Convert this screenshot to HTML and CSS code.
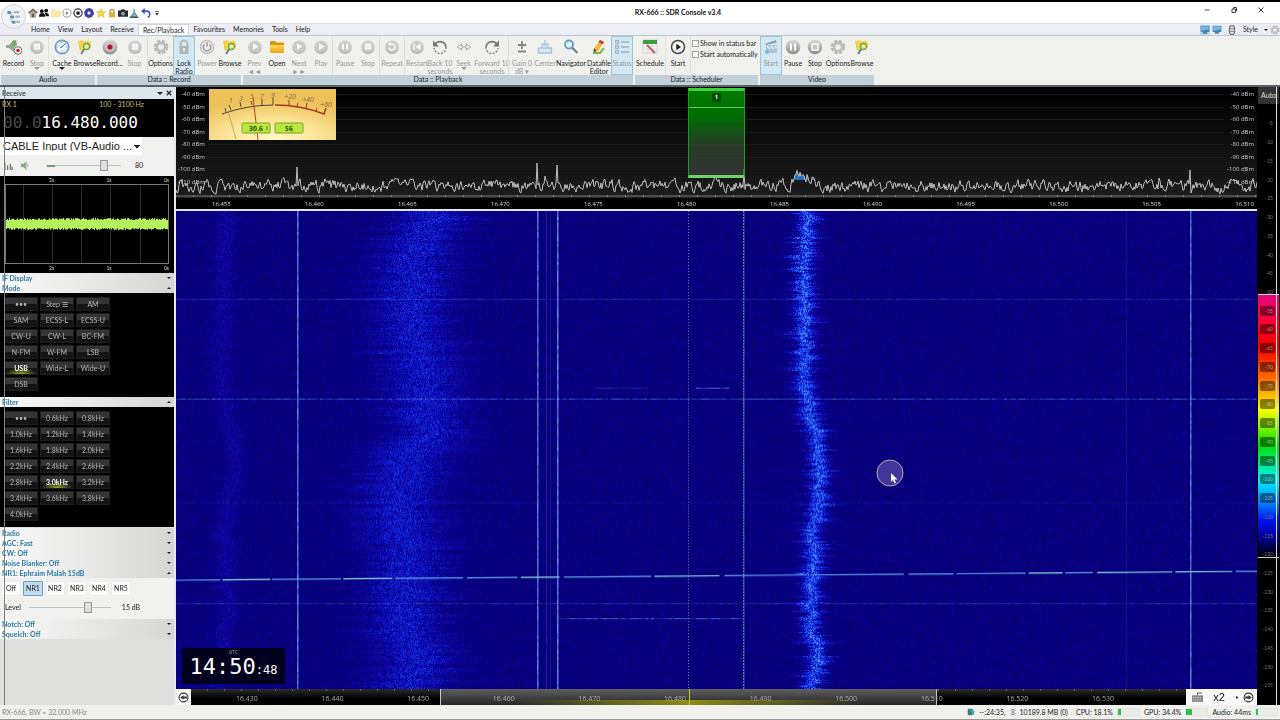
FILE: index.html
```html
<!DOCTYPE html>
<html lang="en">

<head>
  <meta charset="UTF-8">
  <meta name="viewport" content="width=device-width, initial-scale=1.0">
  <title>RX-666 :: SDR Console v3.4</title>
  <link rel="stylesheet" href="styles.css">
</head>

<body>
  <!-- Shared icons -->
  <svg class="defs" aria-hidden="true">
    <defs>
      <linearGradient id="steel" x1="0" y1="0" x2="0" y2="1">
        <stop offset="0" stop-color="#dadada" /><stop offset="1" stop-color="#8c8c8c" />
      </linearGradient>
      <linearGradient id="pale" x1="0" y1="0" x2="0" y2="1">
        <stop offset="0" stop-color="#e4e4e2" /><stop offset="1" stop-color="#b4b4b2" />
      </linearGradient>
      <linearGradient id="gold" x1="0" y1="0" x2="0" y2="1">
        <stop offset="0" stop-color="#ffd75a" /><stop offset="1" stop-color="#eda51c" />
      </linearGradient>
      <radialGradient id="dial" cx=".5" cy="1" r=".8">
        <stop offset="0" stop-color="#fff8c8" /><stop offset=".5" stop-color="#fbe394" /><stop offset="1" stop-color="#edc058" />
      </radialGradient>
      <symbol id="i-disc" viewBox="0 0 16 16"><circle cx="8" cy="8" r="7" fill="url(#pale)" /><circle cx="8" cy="7.500" r="5.500" fill="#c9c9c7" /></symbol>
      <symbol id="i-record" viewBox="0 0 16 16"><circle cx="8" cy="8" r="7.500" fill="url(#steel)" /><circle cx="8" cy="8" r="5" fill="#c9c4c4" /><circle cx="8" cy="8" r="2.600" fill="#c4122a" /></symbol>
      <symbol id="i-stop" viewBox="0 0 16 16"><use href="#i-disc" /><rect x="5.500" y="5" width="5" height="5" fill="#eee" stroke="#fff" /></symbol>
      <symbol id="i-stop-on" viewBox="0 0 16 16"><circle cx="8" cy="8" r="7.300" fill="url(#steel)" /><rect x="5" y="5" width="6" height="6" fill="#c4c4c4" stroke="#fff" stroke-width="1.400" /></symbol>
      <symbol id="i-pause" viewBox="0 0 16 16"><use href="#i-disc" /><path d="M6 4.500v6M10 4.500v6" stroke="#f6f6f6" stroke-width="2" /></symbol>
      <symbol id="i-pause-on" viewBox="0 0 16 16"><circle cx="8" cy="8" r="7.300" fill="url(#steel)" /><path d="M6 4.500v7M10 4.500v7" stroke="#fff" stroke-width="2" /></symbol>
      <symbol id="i-play" viewBox="0 0 16 16"><use href="#i-disc" /><path d="M6 4l5.500 3.500L6 11z" fill="#f6f6f6" /></symbol>
      <symbol id="i-restart" viewBox="0 0 16 16"><use href="#i-disc" /><path d="M5 4.500v6.500" stroke="#f6f6f6" stroke-width="1.500" /><path d="M11.500 4L6.500 7.700l5 3.500z" fill="#f6f6f6" /></symbol>
      <symbol id="i-repeat" viewBox="0 0 16 16"><use href="#i-disc" /><path d="M5 8.500a3 3 0 1 0 3-3.500H6" fill="none" stroke="#f6f6f6" stroke-width="1.500" /><path d="M7 2.500v5L4 5z" fill="#f6f6f6" /></symbol>
      <symbol id="i-gear" viewBox="0 0 16 16"><circle cx="8" cy="8" r="5.800" fill="none" stroke="#b8b8b8" stroke-width="3" stroke-dasharray="3.200 1.355" /><circle cx="8" cy="8" r="4" fill="#efefed" stroke="#bdbdbd" stroke-width="2.400" /></symbol>
      <symbol id="i-clock" viewBox="0 0 16 16"><circle cx="8" cy="8" r="6.700" fill="#edf5fd" stroke="#6d9bd2" stroke-width="1.700" /><path d="M8 8l3.500-3.500M8 8l-2 .500" stroke="#3c6aa8" stroke-width="1" /><path d="M8 2.500v1.500M8 12v1.500M2.500 8H4M12 8h1.500" stroke="#7ca4d0" /></symbol>
      <symbol id="i-browse" viewBox="0 0 16 16"><path d="M1 2l5-1 1 1.500 6-1 1 7-11 3z" fill="url(#gold)" /><path d="M2 5l12-1-3 6-7 2z" fill="#e9d84b" /><circle cx="9.500" cy="7.500" r="3" fill="#d9ecc0" stroke="#7ea52e" stroke-width="1.300" /><path d="M7.500 10L4 15" stroke="#5d86a8" stroke-width="2" /></symbol>
      <symbol id="i-folder" viewBox="0 0 16 16"><path d="M1 3q0-1 1-1h4l1.500 1.500H14q1 0 1 1V13H1z" fill="#d6961a" /><path d="M1 6h14v7q0 1-1 1H2q-1 0-1-1z" fill="url(#gold)" /></symbol>
      <symbol id="i-lock" viewBox="0 0 16 16"><path d="M4.500 8V5a3.500 3.500 0 0 1 7 0v3" fill="none" stroke="#b4bcc0" stroke-width="2" /><rect x="3.500" y="7" width="9" height="8" rx="1" fill="#aeb6ba" /><circle cx="8" cy="10" r="1.300" fill="#e7edf0" /><path d="M8 10v3" stroke="#e7edf0" stroke-width="1.200" /></symbol>
      <symbol id="i-power" viewBox="0 0 16 16"><circle cx="8" cy="8" r="6.500" fill="#ececea" stroke="#c2c2c0" stroke-width="1.500" /><path d="M5.500 5.500a3.700 3.700 0 1 0 5 0M8 3v4.500" fill="none" stroke="#9b9b99" stroke-width="1.500" /></symbol>
      <symbol id="i-speaker" viewBox="0 0 16 16"><path d="M0 6h3l5-5v12l-5-4H0z" fill="#9ba59b" /><path d="M6 2l4-1 1 5-4 3z" fill="#6fae5e" /><circle cx="12" cy="11.500" r="3.800" fill="#fff" stroke="#555" stroke-width=".900" /><circle cx="12" cy="11.500" r="1.800" fill="#d01830" /></symbol>
      <symbol id="i-back" viewBox="0 0 16 16"><path d="M3 5.500A6 6 0 0 1 14 8" fill="none" stroke="#777" stroke-width="1.700" /><path d="M14 8A6 6 0 0 1 2 9" fill="none" stroke="#888" stroke-width="1.500" stroke-dasharray="2 1.400" /><path d="M1 1.500v6h6z" fill="#777" /></symbol>
      <symbol id="i-fwd" viewBox="0 0 16 16"><path d="M13 5.500A6 6 0 0 0 2 8" fill="none" stroke="#777" stroke-width="1.700" /><path d="M2 8A6 6 0 0 0 14 9" fill="none" stroke="#888" stroke-width="1.500" stroke-dasharray="2 1.400" /><path d="M15 1.500v6H9z" fill="#777" /></symbol>
      <symbol id="i-seek" viewBox="0 0 16 16"><path d="M1 8l4.500-3v2H7v2H5.500v2zM15 8l-4.500-3v2H9v2h1.500v2z" fill="#eee" stroke="#a5a5a3" stroke-width=".900" /></symbol>
      <symbol id="i-gain" viewBox="0 0 16 16"><path d="M8 2v8M4 6h8M4 12.500h8" stroke="#858583" stroke-width="1.800" /></symbol>
      <symbol id="i-center" viewBox="0 0 16 16"><path d="M8 1v6M5 5h6v4H5zM1.500 9h13v5h-13z" fill="#dce8f0" stroke="#a9c3d4" stroke-width="1.300" /></symbol>
      <symbol id="i-search" viewBox="0 0 16 16"><circle cx="6" cy="5.500" r="4" fill="#e3f2fb" stroke="#5b9fd0" stroke-width="1.800" /><path d="M9 8.500l5.500 5.500" stroke="#6f7f90" stroke-width="2.200" /></symbol>
      <symbol id="i-pencil" viewBox="0 0 16 16"><path d="M9 1l4 2-6 9-4 1 .500-4z" fill="#f4b62c" /><path d="M9 1l4 2-1.500 2.300-4-2.200z" fill="#b6404a" /><path d="M2 14h7l4-5" fill="none" stroke="#73b533" stroke-width="2" /><path d="M3 9l-.500 4 3-1z" fill="#503820" /></symbol>
      <symbol id="i-list" viewBox="0 0 16 16"><path d="M1.500 1.500h3v3h-3zM1.500 6.500h3v3h-3zM1.500 11.500h3v3h-3z" fill="#c6d9e4" stroke="#8fb0c5" stroke-width=".900" /><path d="M7 3h8M7 8h8M7 13h8" stroke="#9bb8ca" stroke-width="1.300" /></symbol>
      <symbol id="i-sched" viewBox="0 0 16 16"><rect x="1" y="1" width="14" height="13" fill="#f2f2f2" stroke="#c5c5c5" stroke-width=".700" /><rect x="1" y="1" width="14" height="4" fill="#35a03b" /><path d="M3 7h10M3 10h10M6 5v9M10 5v9" stroke="#cfd6cf" stroke-width=".800" /><path d="M5 6l8 8" stroke="#cc5568" stroke-width="1.800" /></symbol>
      <symbol id="i-go" viewBox="0 0 16 16"><circle cx="8" cy="8" r="6.500" fill="#f5f5f3" stroke="#4a4a4a" stroke-width="1.500" /><path d="M6.300 4.800L11 8l-4.700 3.200z" fill="#222" /></symbol>
      <symbol id="i-clapper" viewBox="0 0 16 16"><path d="M2 5l11-4 .500 2.500L3 6z" fill="#7f9eb2" /><rect x="3" y="6" width="11" height="8" fill="#a9c4d6" /><path d="M4 7l3 3M8 7l3 3M12 7l2 2" stroke="#e3f0f7" stroke-width="1.300" /><circle cx="4" cy="13" r="2" fill="#8db2c8" /></symbol>
      <symbol id="i-monitor" viewBox="0 0 16 16"><rect x="1" y="1" width="14" height="10" rx="1" fill="#3f83b8" /><path d="M2 2h12v5q-6 0-12 3z" fill="#79b5de" /><path d="M4 14h8l-1-3H5z" fill="#5c7f9b" /></symbol>
    </defs>
  </svg>

  <div class="app">
    <header class="titlebar">
      <div class="app-icon">
        <svg viewBox="0 0 24 24" width="18" height="18"><path d="M4 6h7M8 6v12h5M8 12h6" fill="none" stroke="#9db1bd" /><g fill="#5d97b0"><rect x="3" y="4" width="5" height="4" rx="1" /><rect x="7" y="10" width="5" height="4" rx="1" /><rect x="9" y="17" width="5" height="4" rx="1" /></g><g fill="#a9b9bf"><rect x="12" y="4" width="7" height="3" /><rect x="14" y="10" width="6" height="3" /><rect x="15" y="17" width="5" height="3" /></g></svg>
      </div>
      <div class="quick">
        <svg viewBox="0 0 16 16"><path d="M1 8l7-7 7 7-2 1v6H3V9z" fill="#b8a88c" /><path d="M1 8l7-6 7 6" fill="none" stroke="#555" stroke-width="2" /><rect x="6.500" y="9" width="3" height="6" fill="#555" /></svg>
        <svg viewBox="0 0 16 16" fill="#111"><circle cx="4.500" cy="5" r="3" /><circle cx="11.500" cy="4" r="3" /><path d="M0 14q0-6 5-6t5 6zM9 7q7 0 7 6h-5z" /></svg>
        <svg viewBox="0 0 16 16"><path d="M1 3h5l1 2h8v9H1z" fill="#fbe6b0" stroke="#f0d48c" /></svg>
        <svg viewBox="0 0 16 16"><circle cx="8" cy="8" r="6.500" fill="none" stroke="#999" stroke-width="1.500" /><path d="M6 5l5 3-5 3z" fill="#888" /></svg>
        <svg viewBox="0 0 16 16"><circle cx="8" cy="8" r="6.500" fill="none" stroke="#333" stroke-width="2" /><circle cx="8" cy="8" r="3" fill="#222" /></svg>
        <svg viewBox="0 0 16 16"><circle cx="8" cy="8" r="5" fill="none" stroke="#3f3fae" stroke-width="5" /><circle cx="8" cy="8" r="6.800" fill="none" stroke="#3f3fae" stroke-width="2" stroke-dasharray="3 2" /></svg>
        <svg viewBox="0 0 16 16"><path d="M8 1l2 5h5l-4 3 2 6-5-3-5 3 2-6-4-3h5z" fill="#f3dc3e" stroke="#dcae22" /></svg>
        <svg viewBox="0 0 16 16"><path d="M5 8V5a3 3 0 0 1 6 0v3" fill="none" stroke="#a78e3b" stroke-width="2" /><rect x="3" y="7" width="10" height="8" fill="#d9b73e" /></svg>
        <svg viewBox="0 0 16 16"><path d="M0 4h4l2-2h4l2 2h4v10H0z" fill="#2b2b33" /><circle cx="8" cy="9" r="3" fill="#8aa" /></svg>
        <svg viewBox="0 0 16 16"><path d="M8 1v6l-5 7h10L9 7" fill="#8fb3d2" stroke="#48709a" stroke-width="1.500" /><path d="M1 15h14" stroke="#356" stroke-width="2" /></svg>
        <svg viewBox="0 0 16 16"><path d="M3 5h7q4 1 4 5t-3 5" fill="none" stroke="#2e5fb4" stroke-width="2.500" /><path d="M0 5l6-5v10z" fill="#2e5fb4" /></svg>
        <svg viewBox="0 0 16 16"><path d="M5 5h6v1.500H5zM5 8h6l-3 4z" fill="#333" /></svg>
      </div>
      <h1>RX-666 :: SDR Console v3.4</h1>
      <div class="window-buttons">
        <button aria-label="Minimize"><svg viewBox="0 0 8 8"><path d="M1.500 4h5" /></svg></button>
        <button aria-label="Restore"><svg viewBox="0 0 8 8"><path d="M2 3h3.500v3.500H2zM3.500 3V1.500h3V5H5.500" /></svg></button>
        <button aria-label="Close"><svg viewBox="0 0 8 8"><path d="M1.500 1.500l5 5M6.500 1.500l-5 5" /></svg></button>
      </div>
    </header>

    <nav class="tabs">
      <button>Home</button>
      <button>View</button>
      <button>Layout</button>
      <button>Receive</button>
      <button class="current">Rec/Playback</button>
      <button>Favourites</button>
      <button>Memories</button>
      <button>Tools</button>
      <button>Help</button>
      <div class="style-tools">
        <svg class="picked"><use href="#i-monitor" /></svg>
        <svg><use href="#i-monitor" /></svg>
        <svg class="clip" viewBox="0 0 16 16"><rect x="4" y="1" width="8" height="14" rx="4" fill="none" stroke="#777" stroke-width="2" /><path d="M4 6h8M4 10h8" stroke="#777" stroke-width="1.500" /></svg>
        <button>Style</button>
        <i class="caret"></i>
        <svg><use href="#i-gear" /></svg>
      </div>
    </nav>

    <div class="ribbon">
      <section class="group">
        <div class="tools audio">
          <button><svg><use href="#i-speaker" /></svg><span>Record</span></button>
          <button class="off"><svg><use href="#i-stop" /></svg><span>Stop</span><i class="caret"></i></button>
          <button class="split"><svg><use href="#i-clock" /></svg><span>Cache</span><i class="caret"></i></button>
          <button><svg><use href="#i-browse" /></svg><span>Browse</span></button>
        </div>
        <h2>Audio</h2>
      </section>
      <section class="group">
        <div class="tools record">
          <button><svg><use href="#i-record" /></svg><span>Record...</span></button>
          <button class="off"><svg><use href="#i-stop" /></svg><span>Stop</span></button>
          <button class="split"><svg><use href="#i-gear" /></svg><span>Options</span></button>
          <button class="checked"><svg><use href="#i-lock" /></svg><span>Lock<br>Radio</span></button>
          <button class="off"><svg><use href="#i-power" /></svg><span>Power</span></button>
          <button><svg><use href="#i-browse" /></svg><span>Browse</span></button>
        </div>
        <h2>Data :: Record</h2>
      </section>
      <section class="group">
        <div class="tools playback">
          <button class="off"><svg><use href="#i-play" /></svg><span>Prev<br>◄◄</span></button>
          <button><svg><use href="#i-folder" /></svg><span>Open</span></button>
          <button class="off"><svg><use href="#i-play" /></svg><span>Next<br>►►</span></button>
          <button class="off"><svg><use href="#i-play" /></svg><span>Play</span></button>
          <button class="off split"><svg><use href="#i-pause" /></svg><span>Pause</span></button>
          <button class="off"><svg><use href="#i-stop" /></svg><span>Stop</span></button>
          <button class="off split"><svg><use href="#i-repeat" /></svg><span>Repeat</span></button>
          <button class="off split"><svg><use href="#i-restart" /></svg><span>Restart</span></button>
          <button class="off"><svg><use href="#i-back" /></svg><span>Back 10<br>seconds</span></button>
          <button class="off"><svg><use href="#i-seek" /></svg><span>Seek</span><i class="caret"></i></button>
          <button class="off"><svg><use href="#i-fwd" /></svg><span>Forward 10<br>seconds</span></button>
          <button class="off split"><svg><use href="#i-gain" /></svg><span>Gain 0<br>dB ▾</span></button>
          <button class="off"><svg><use href="#i-center" /></svg><span>Center</span></button>
          <button><svg><use href="#i-search" /></svg><span>Navigator</span></button>
          <button><svg><use href="#i-pencil" /></svg><span>Datafile<br>Editor</span></button>
          <button class="off checked"><svg><use href="#i-list" /></svg><span>Status</span></button>
        </div>
        <h2>Data :: Playback</h2>
      </section>
      <section class="group">
        <div class="tools scheduler">
          <button><svg><use href="#i-sched" /></svg><span>Schedule</span></button>
          <button class="split"><svg><use href="#i-go" /></svg><span>Start</span></button>
          <div class="checks split">
            <label><input type="checkbox">Show in status bar</label>
            <label><input type="checkbox">Start automatically</label>
          </div>
        </div>
        <h2>Data :: Scheduler</h2>
      </section>
      <section class="group">
        <div class="tools video">
          <button class="off checked"><svg><use href="#i-clapper" /></svg><span>Start</span></button>
          <button><svg><use href="#i-pause-on" /></svg><span>Pause</span></button>
          <button><svg><use href="#i-stop-on" /></svg><span>Stop</span></button>
          <button><svg><use href="#i-gear" /></svg><span>Options</span></button>
          <button><svg><use href="#i-browse" /></svg><span>Browse</span></button>
        </div>
        <h2>Video</h2>
      </section>
    </div>

    <main>
      <aside class="receive">
        <div class="panel-title">Receive <span><i class="caret"></i><svg viewBox="0 0 8 8"><path d="M1 1l6 6M7 1L1 7" stroke="#222" stroke-width="1.500" /></svg></span></div>
        <div class="vfo">
          <div class="vfo-top"><span>RX 1</span><span>100 - 3100 Hz</span></div>
          <div class="freq"><span>00.0</span>16.480.000</div>
        </div>
        <div class="output">
          <select aria-label="Output device"><option>CABLE Input (VB-Audio ...</option></select>
          <div class="volume">
            <svg viewBox="0 0 10 10"><path d="M1 2v8M4 5v5M7 3v7M9 6v4" stroke="#777" stroke-width="1.500" /></svg>
            <svg viewBox="0 0 10 10"><path d="M0 3h3l3-3v10L3 7H0z" fill="#8fa88a" /><path d="M7 3q2 2 0 4" fill="none" stroke="#8fa88a" /></svg>
            <input type="range" min="0" max="100" value="80" aria-label="Volume">
            <output>80</output>
          </div>
        </div>
        <div class="scope">
          <div class="ticks"><span>2s</span><span>1s</span><span>0s</span></div>
          <canvas id="scope" width="164" height="80"></canvas>
          <div class="ticks"><span>2s</span><span>1s</span><span>0s</span></div>
        </div>
        <h3>IF Display</h3>
        <h3 class="open">Mode</h3>
        <div class="keys">
          <button>•••</button><button>Step ☰</button><button>AM</button>
          <button>SAM</button><button>ECSS-L</button><button>ECSS-U</button>
          <button>CW-U</button><button>CW-L</button><button>BC-FM</button>
          <button>N-FM</button><button>W-FM</button><button>LSB</button>
          <button class="lit">USB</button><button>Wide-L</button><button>Wide-U</button>
          <button>DSB</button>
        </div>
        <h3 class="open">Filter</h3>
        <div class="keys">
          <button>•••</button><button>0.6kHz</button><button>0.8kHz</button>
          <button>1.0kHz</button><button>1.2kHz</button><button>1.4kHz</button>
          <button>1.6kHz</button><button>1.8kHz</button><button>2.0kHz</button>
          <button>2.2kHz</button><button>2.4kHz</button><button>2.6kHz</button>
          <button>2.8kHz</button><button class="lit">3.0kHz</button><button>3.2kHz</button>
          <button>3.4kHz</button><button>3.6kHz</button><button>3.8kHz</button>
          <button>4.0kHz</button>
        </div>
        <div class="sections">
          <h3>Radio</h3>
          <h3>AGC: Fast</h3>
          <h3>CW: Off</h3>
          <h3>Noise Blanker: Off</h3>
          <h3 class="open">NR1: Ephraim Malah 15dB</h3>
          <div class="nr">
            <div class="nr-buttons">
              <button>Off</button><button class="on">NR1</button><button>NR2</button><button>NR3</button><button>NR4</button><button>NR5</button>
            </div>
            <div class="level">
              <label for="level">Level</label>
              <input type="range" id="level" min="0" max="20" value="15">
              <output>15 dB</output>
            </div>
          </div>
          <h3>Notch: Off</h3>
          <h3>Squelch: Off</h3>
        </div>
      </aside>

      <section class="display">
        <div class="spectrum">
          <canvas id="spectrum" width="1081" height="108"></canvas>
          <div class="dbm"><span>-40 dBm</span><span>-50 dBm</span><span>-60 dBm</span><span>-70 dBm</span><span>-80 dBm</span><span>-90 dBm</span><span>-100 dBm</span><span>-110 dBm</span></div>
          <div class="dbm right"><span>-40 dBm</span><span>-50 dBm</span><span>-60 dBm</span><span>-70 dBm</span><span>-80 dBm</span><span>-90 dBm</span><span>-100 dBm</span><span>-110 dBm</span></div>
          <div class="passband"><b>1</b></div>
          <svg class="meter" viewBox="0 0 127 51" role="img" aria-label="Signal meter">
            <rect width="127" height="51" fill="url(#dial)" />
            <path d="M13 25Q38 16 64 16" fill="none" stroke="#444" />
            <path d="M66 16Q92 16 115 25l2-6" fill="none" stroke="#a83426" stroke-width="1.500" />
            <path d="M17 23l-1-4M22 21l-2-5M32 18l-1-5M43 16l-1-4M53 16v-6M64 16v-7" stroke="#5a4a30" />
            <path d="M80 16v-5M97 19l1-5M88 17l1-3M107 22l1-3" stroke="#a83426" />
            <path d="M19 22l8 28" stroke="#8d8469" stroke-width=".600" />
            <path d="M44 8l5 43" stroke="#b8402a" />
            <g class="meter-scale"><text x="22" y="14">1</text><text x="32" y="12">3</text><text x="43" y="10">5</text><text x="53" y="10">7</text><text x="64" y="9">9</text><text x="81" y="10">+20</text><text x="99" y="13">+40</text><text x="117" y="18">+60</text></g>
            <rect x="33" y="34" width="28" height="10" rx="1" fill="#b9e83c" stroke="#7ba52e" />
            <rect x="66" y="34" width="28" height="10" rx="1" fill="#b9e83c" stroke="#7ba52e" />
            <g class="meter-value"><text x="47" y="42">30.6</text><text x="80" y="42">S6</text></g>
            <path d="M58 37v4" stroke="#5c7b20" />
          </svg>
        </div>
        <div class="axis"><span>16.455</span><span>16.460</span><span>16.465</span><span>16.470</span><span>16.475</span><span>16.480</span><span>16.485</span><span>16.490</span><span>16.495</span><span>16.500</span><span>16.505</span><span>16.510</span></div>
        <div class="waterfall">
          <canvas id="waterfall" width="1081" height="479"></canvas>
          <div class="clock"><small>UTC</small><div>14:50<span>:48</span></div></div>
          <svg class="pointer" viewBox="0 0 28 28"><circle cx="14" cy="14" r="13" fill="#42369a" stroke="#b9a9a9" /><path d="M15 14v9l2-2 1.500 3.500 1.500-1-1.500-3h3z" fill="#fff" /></svg>
        </div>
        <div class="band">
          <button aria-label="Band down"><svg viewBox="0 0 10 10"><circle cx="5" cy="5" r="4" fill="none" stroke="#333" /><path d="M2 5l3-2v4zM5 4h3v2H5z" fill="#333" /></svg></button>
          <div class="band-axis">
            <div class="band-view"></div>
            <span>16.430</span><span>16.440</span><span>16.450</span><span>16.460</span><span>16.470</span><span>16.480</span><span>16.490</span><span>16.500</span><span>16.510</span><span>16.520</span><span>16.530</span>
          </div>
          <div class="zoom">
            <button aria-label="Keyboard"><svg viewBox="0 0 10 10"><path d="M0 3h10v6H0z" fill="#888" /><path d="M1 5h8M1 7h8" stroke="#ddd" stroke-dasharray="1 1" /><path d="M5 3V1h4" fill="none" stroke="#777" /></svg></button>
            <button class="factor">x2</button>
            <button class="more" aria-label="More"><svg viewBox="0 0 10 10"><path d="M4 3l3 2-3 2z" fill="#222" /></svg></button>
            <button aria-label="Band up"><svg viewBox="0 0 10 10"><circle cx="5" cy="5" r="4" fill="none" stroke="#333" /><path d="M8 5L5 3v4zM2 4h3v2H2z" fill="#333" /></svg></button>
          </div>
        </div>
      </section>

      <aside class="levels">
        <button>Auto</button>
        <div class="level-scale" id="levels"></div>
      </aside>
    </main>

    <footer>
      <span class="device">RX-666, BW = 32.000 MHz</span>
      <svg viewBox="0 0 10 10"><path d="M1 1h6v8H1z" fill="#4d6e86" /><path d="M3 3h6v6z" fill="#30b0a0" /></svg>
      <span>--:24:35,</span>
      <svg class="disk" viewBox="0 0 10 10"><path d="M3 1h4v2l-2 2 2 2v2H3V7l2-2-2-2z" fill="none" stroke="#555" /></svg>
      <span>10189.8 MB (0)</span>
      <span class="gap">CPU: 18.1%</span><meter min="0" max="100" value="14"></meter>
      <span>GPU: 34.4%</span><meter min="0" max="100" value="28"></meter>
      <span>Audio: 44ms</span><meter min="0" max="100" value="8"></meter>
    </footer>
  </div>

  <script src="script.js"></script>
</body>

</html>
```

FILE: styles.css
```css
* {
  box-sizing: border-box;
}

body {
  margin: 0;
  font-family: Lato, "Open Sans", sans-serif;
  font-size: 7px;
  line-height: 9px;
  color: #222;
  background-color: #000;
}

button,
select,
input {
  font: inherit;
  color: inherit;
  margin: 0;
  padding: 0;
  border: none;
  border-radius: 0;
  background: none;
}

h1,
h2,
h3 {
  margin: 0;
  font-size: 7px;
}

svg {
  display: block;
  flex: none;
}

.defs {
  position: absolute;
  width: 0;
  height: 0;
}

.app {
  display: flex;
  flex-direction: column;
  height: 100vh;
  padding-top: 2px;
}

.caret {
  border: 3px solid transparent;
  border-top: 3px solid currentColor;
  border-bottom: none;
}

/* Title bar */
.titlebar {
  display: flex;
  align-items: center;
  height: 21px;
  background-color: #fff;
  position: relative;
}

.app-icon {
  position: absolute;
  left: 1px;
  top: 2px;
  width: 25px;
  height: 25px;
  padding: 3px;
  border: 1px solid #d4d4d8;
  border-radius: 50%;
  background-color: #f2f2f5;
}

.quick {
  display: flex;
  justify-content: space-between;
  width: 134px;
  margin-left: 28px;
}

.quick svg {
  width: 10px;
  height: 10px;
}

.titlebar h1 {
  flex: 1;
  text-align: center;
  color: #111;
}

.window-buttons {
  display: flex;
  align-self: flex-start;
  width: 86px;
}

.window-buttons button {
  width: 27px;
  height: 16px;
  padding: 0 9px;
}

.window-buttons svg {
  width: 8px;
  height: 8px;
  fill: none;
  stroke: #444;
  stroke-width: 1;
}

/* Tabs */
.tabs {
  display: flex;
  height: 12px;
  padding-left: 27px;
  background-color: #ecedf5;
  border-top: 1px solid #dcdce4;
}

.tabs button {
  padding: 0 4px;
}

.tabs .current {
  background-color: #fff;
  border: 1px solid #cfd6dc;
  border-bottom: none;
}

.style-tools {
  display: flex;
  align-items: center;
  gap: 2px;
  margin-left: auto;
}

.style-tools svg {
  width: 10px;
  height: 10px;
}

.style-tools .picked {
  background-color: #b9d8ee;
}

.style-tools .clip {
  margin-left: 3px;
}

.style-tools .caret {
  border-width: 2px;
  border-bottom: none;
}

/* Ribbon */
.ribbon {
  display: flex;
  gap: 2px;
  height: 52px;
  padding: 0 1px;
  background-color: #f0f0ed;
  border-top: 1px solid #b9cad4;
  border-bottom: 2px solid #5b6266;
}

.group h2 {
  height: 10px;
  font-weight: normal;
  text-align: center;
  background-color: #c2d0da;
}

.tools {
  display: grid;
  grid-template-rows: 39px;
  height: 39px;
}

.tools button {
  display: flex;
  flex-direction: column;
  align-items: center;
  padding-top: 3px;
  line-height: 8px;
  white-space: nowrap;
}

.tools svg {
  width: 16px;
  height: 16px;
  margin-bottom: 4px;
}

.tools .off {
  color: #979795;
}

.tools .split {
  border-left: 1px solid #dededb;
}

.tools .checked {
  background-color: #d3e8f3;
  border: 1px solid #9cc4da;
  padding-top: 2px;
}

.audio {
  grid-template-columns: 25px 22px 27px 20px;
}

.record {
  grid-template-columns: 25px 25px 26px 22px 24px 22px;
}

.playback {
  grid-template-columns: 23px 22px 22px 22px 25px 22px 25px 25px 22px 25px 32px 27px 20px 32px 24px 22px;
}

.scheduler {
  grid-template-columns: 30px 25px 68px;
}

.video {
  grid-template-columns: 22px 22px 22px 24px 24px;
}

.checks {
  display: flex;
  flex-direction: column;
  gap: 2px;
  padding: 3px 1px;
  white-space: nowrap;
}

.checks label {
  display: flex;
  align-items: center;
  gap: 1px;
}

.checks input {
  appearance: none;
  flex: none;
  width: 7px;
  height: 7px;
  border: 1px solid #a0a0a0;
  background-color: #fff;
}

/* Main */
main {
  display: flex;
  flex: 1;
  min-height: 0;
  position: relative;
}

/* Window edges that run down both sides */
main::before,
main::after {
  content: "";
  position: absolute;
  z-index: 2;
  top: 0;
  bottom: 0;
  left: 4px;
  width: 1px;
  background-color: #7c8183;
}

main::after {
  left: auto;
  right: 3px;
  background-color: #dcdcdc;
}

.receive {
  width: 176px;
  background-color: #dfdfdd;
  border-right: 2px solid #e8e8ec;
}

.panel-title {
  display: flex;
  justify-content: space-between;
  align-items: center;
  height: 12px;
  padding: 0 2px;
  background-color: #dbe6ed;
}

.panel-title span {
  display: flex;
  align-items: center;
  gap: 3px;
}

.panel-title svg {
  width: 6px;
  height: 6px;
}

.vfo {
  height: 38px;
  color: #c9bf72;
  background-color: #000;
}

.vfo-top {
  display: flex;
  justify-content: space-between;
  padding: 1px 30px 0 2px;
}

.freq {
  padding: 5px 0 0 3px;
  font-family: "DejaVu Sans Mono", monospace;
  font-size: 16px;
  line-height: 18px;
  color: #fff;
}

.freq span {
  color: #4a4a4a;
}

.output {
  height: 39px;
  background-color: #f1f1ef;
}

.output select {
  display: block;
  width: 142px;
  height: 18px;
  padding-left: 3px;
  appearance: none;
  font-family: "Liberation Sans", sans-serif;
  font-size: 11px;
  background: #fff conic-gradient(from -45deg at 50% 100%, #222 90deg, transparent 0) no-repeat 134px 8px / 6px 3px;
}

.volume {
  display: flex;
  align-items: center;
  gap: 8px;
  height: 21px;
  padding-left: 4px;
}

.volume svg {
  width: 9px;
  height: 9px;
}

.volume input {
  width: 74px;
  margin: 0 6px 0 9px;
}

input[type="range"] {
  appearance: none;
  height: 13px;
  background: linear-gradient(#c4c4c2, #c4c4c2) no-repeat center / 100% 1px;
}

.volume input[type="range"] {
  background: linear-gradient(#6f9c6c, #6f9c6c) no-repeat left / 8px 2px, linear-gradient(#b5c8b3, #b5c8b3) no-repeat center / 100% 1px;
}

input[type="range"]::-webkit-slider-thumb {
  appearance: none;
  width: 8px;
  height: 11px;
  border: 1px solid #999;
  background-color: #dedede;
}

.scope {
  height: 97px;
  padding: 0 5px;
  color: #ddd;
  background-color: #000;
}

.scope canvas {
  display: block;
  width: 100%;
  height: 80px;
}

.scope .ticks {
  display: flex;
  justify-content: space-between;
  padding-left: 44px;
  font-size: 5px;
  line-height: 8px;
}

.receive h3 {
  display: flex;
  align-items: center;
  justify-content: space-between;
  height: 10px;
  padding: 0 3px 0 2px;
  color: #2b7aa6;
  background: linear-gradient(90deg, #fafafa, #d6d6d4);
}

.receive h3::after {
  content: "";
  border: 2px solid transparent;
  border-top-color: #222;
  border-bottom: none;
}

.receive h3.open::after {
  border-top: none;
  border-bottom: 2px solid #222;
}

.keys {
  display: grid;
  grid-template-columns: repeat(3, 34px);
  grid-auto-rows: 14px;
  gap: 2px;
  padding: 4px 4px 6px;
  background-color: #000;
}

.keys button {
  color: #b4b4b4;
  background: linear-gradient(#353535 0 50%, #141414 50%);
  border: 1px solid #1e1e1e;
}

.keys .lit {
  color: #fff;
  font-weight: bold;
  background: radial-gradient(ellipse 16px 6px at 50% 100%, #9aa62c, transparent), linear-gradient(#353535 0 50%, #141414 50%);
}

.sections {
  padding-top: 1px;
}

.nr {
  height: 41px;
  padding: 3px 1px 0;
  background-color: #f1f1ef;
}

.nr-buttons {
  display: flex;
  gap: 2px;
}

.nr-buttons button {
  width: 20px;
  height: 15px;
  background-color: #fbfbfb;
  border: 1px solid #ececea;
  border-radius: 1px;
}

.nr-buttons .on {
  background-color: #c3daea;
  border-color: #6ba0c0;
}

.level {
  display: flex;
  align-items: center;
  height: 23px;
  padding-left: 4px;
}

.level input {
  width: 82px;
  margin: 0 11px 0 8px;
}

/* Spectrum and waterfall */
.display {
  display: flex;
  flex: 1;
  flex-direction: column;
  min-width: 0;
  color: #c8c8c8;
  font-family: "Open Sans", sans-serif;
  font-size: 6px;
}

.spectrum {
  position: relative;
  height: 108px;
}

.spectrum canvas,
.waterfall canvas {
  display: block;
  width: 100%;
  height: 100%;
}

.dbm {
  position: absolute;
  top: 1px;
  left: 2px;
  display: flex;
  flex-direction: column;
  height: 100px;
  text-align: right;
}

.dbm.right {
  left: auto;
  right: 3px;
}

.dbm span {
  flex: 1;
  line-height: 12px;
}

.passband {
  position: absolute;
  top: 1px;
  left: 47.4%;
  width: 5.2%;
  height: 90px;
  text-align: center;
  border: 1px solid #1f9a1f;
  border-top: 3px solid #3fd13f;
  border-bottom: 3px solid #6fd06f;
  background: linear-gradient(rgba(0, 130, 0, 0.95), rgba(0, 120, 0, 0.9) 30%, rgba(60, 90, 60, 0.6) 65%, rgba(70, 70, 70, 0.6));
}

.passband::after {
  content: "";
  position: absolute;
  top: 16px;
  left: 0;
  right: 0;
  height: 1px;
  background-color: #62c462;
}

.passband b {
  display: block;
  width: 9px;
  margin: 2px auto;
  color: #e6ffe6;
  background-color: #064a06;
}

.meter {
  position: absolute;
  top: 2px;
  left: 33px;
  width: 127px;
  height: 51px;
}

.meter text {
  text-anchor: middle;
  font-size: 7px;
}

.meter-scale {
  font-style: italic;
  fill: #80704a;
}

.meter-value {
  font-weight: bold;
  fill: #2f4210;
}

.axis {
  display: flex;
  justify-content: space-between;
  height: 16px;
  padding: 3px 3px 0 36px;
  line-height: 12px;
  color: #ddd;
  background: repeating-linear-gradient(90deg, transparent 0 17px, #888 17px 18px) no-repeat top / 100% 2px, linear-gradient(#4a4a4a 0 2px, #000 3px);
  border-bottom: 2px solid #dfe3ee;
}

.waterfall {
  flex: 1;
  min-height: 0;
  position: relative;
  background-color: #000088;
}

.clock {
  position: absolute;
  left: 6px;
  bottom: 5px;
  width: 103px;
  height: 36px;
  text-align: center;
  font-family: "DejaVu Sans Mono", monospace;
  font-size: 22px;
  line-height: 22px;
  color: #fff;
  background-color: #02021f;
}

.clock small {
  display: block;
  font-size: 5px;
  line-height: 8px;
  color: #aaa;
}

.clock span {
  font-size: 12px;
}

.pointer {
  position: absolute;
  left: 64.8%;
  top: 51.8%;
  width: 28px;
  height: 28px;
}

.band {
  display: flex;
  height: 16px;
  background-color: #f8f8f8;
}

.band button {
  width: 15px;
  padding: 0 2px;
  color: #111;
}

.band svg {
  width: 11px;
  height: 11px;
}

.band-axis {
  display: flex;
  flex: 1;
  justify-content: space-between;
  padding: 0 72px 0 45px;
  font-size: 7px;
  line-height: 20px;
  color: #aaa;
  background: repeating-linear-gradient(90deg, transparent 0 16px, #666 16px 17px) no-repeat top / 100% 2px, linear-gradient(#2c2c2c, #000 60%);
  position: relative;
}

.band-view {
  position: absolute;
  top: 0;
  bottom: 0;
  left: 25%;
  width: 50%;
  background: linear-gradient(90deg, transparent 15%, #8c8c18 50%, transparent 85%) no-repeat bottom / 100% 5px, linear-gradient(#5e5e5e, #262626);
  border: solid #c8c8c8;
  border-width: 0 1px;
}

.band-view::after {
  content: "";
  position: absolute;
  top: 0;
  bottom: 0;
  left: 50%;
  width: 1px;
  background-color: #c8cc30;
}

.band-axis span {
  position: relative;
}

.zoom {
  display: flex;
  width: 71px;
  padding-left: 4px;
}

.zoom .factor {
  width: 28px;
  padding: 0;
  font-family: "Liberation Sans", sans-serif;
  font-size: 11px;
}

.zoom .more {
  width: 8px;
  padding: 0;
}

.zoom .more svg {
  width: 8px;
}

/* Level colours */
.levels {
  display: flex;
  flex-direction: column;
  width: 23px;
  padding: 0 1px;
  color: #777;
  background-color: #000;
}

.levels button {
  height: 17px;
  color: #ddd;
  background-color: #333;
}

.level-scale {
  display: flex;
  flex-direction: column;
  flex: 1;
  margin: 10px 0;
  font-size: 5px;
  background: linear-gradient(transparent 31%, #ddd 31% 31.2%, #e0087c 31.2%, #ff0030 36%, #f00000 40%, #ff6000 45%, #ffb000 48%, #f8ff00 51%, #80f000 54%, #00e000 57%, #00e880 60%, #00f0ff 63%, #0080ff 67%, #0010f0 70%, #000090 73%, #000 76.2%, #ccc 76.2% 76.4%, #000 76.4%);
}

.level-scale span {
  display: flex;
  flex: 1;
  align-items: center;
}

.level-scale b {
  width: 15px;
  margin-left: 2px;
  padding-right: 2px;
  font-weight: normal;
  text-align: right;
  line-height: 10px;
  border-radius: 2px;
}

.level-scale .boxed b {
  color: rgba(255, 255, 255, 0.5);
  background-color: rgba(0, 0, 0, 0.45);
}

/* Status bar */
footer {
  display: flex;
  align-items: center;
  gap: 4px;
  height: 15px;
  padding: 0 2px;
  background-color: #f0f0ed;
  border-bottom: 1px solid #999;
}

footer .device {
  flex: 1;
  color: #888;
}

footer svg {
  width: 8px;
  height: 8px;
}

footer .disk {
  width: 6px;
}

footer .gap {
  margin-left: 4px;
}

meter {
  width: 23px;
  height: 8px;
}

meter::-webkit-meter-bar {
  height: 8px;
  border: 1px solid #e2e2df;
  border-radius: 0;
  background: #ebebe8;
}

meter::-webkit-meter-optimum-value {
  background: #2fbf4a;
}
```

FILE: script.js
```js
// small seeded generator so that the noise is the same on every load
let seed = 4711;
function rand() {
  seed = (seed * 1664525 + 1013904223) % 4294967296;
  return seed / 4294967296;
}

function interpolate(points, pos) {
  for (let i = 1; i < points.length; i++) {
    if (pos <= points[i][0]) {
      const [a, va] = points[i - 1];
      const [b, vb] = points[i];
      return va + (vb - va) * (pos - a) / (b - a);
    }
  }
  return points[points.length - 1][1];
}

function drawScope() {
  const ctx = document.getElementById('scope').getContext('2d');
  ctx.strokeStyle = '#2c2c2c';
  for (let x = 17.5; x < 164; x += 29.3) {
    ctx.strokeRect(Math.round(x) + 0.5, 0, 0, 80);
  }
  ctx.strokeStyle = '#777';
  ctx.strokeRect(0.5, 0.5, 163, 79);
  ctx.fillStyle = '#b4f35c';
  for (let x = 1; x < 163; x++) {
    const up = 4 + rand() * 2;
    ctx.fillRect(x, 40 - up, 1, up + 4 + rand() * 2);
  }
}

function drawSpectrum() {
  const ctx = document.getElementById('spectrum').getContext('2d');
  const back = ctx.createLinearGradient(0, 0, 0, 108);
  back.addColorStop(0, '#000');
  back.addColorStop(1, '#1b1b1b');
  ctx.fillStyle = back;
  ctx.fillRect(0, 0, 1081, 108);
  ctx.fillStyle = '#1b1b1b';
  for (let i = 0; i < 8; i++) {
    ctx.fillRect(32, Math.round(7 + i * 12.5), 1016, 1);
  }

  const peaks = { 121: 80, 361: 76, 369: 89, 381: 78, 568: 82, 1014: 83, 983: 91 };
  const line = [];
  let level = 0;
  for (let x = 0; x <= 1081; x++) {
    level = level * 0.55 + (rand() - 0.5) * 10;
    const hump = 11 * Math.exp(-Math.pow((x - 628) / 12, 4));
    line.push(peaks[x] || 99 + level - hump);
  }
  ctx.fillStyle = '#2c6fc0';
  for (let x = 617; x < 638; x++) {
    ctx.fillRect(x, line[x], 1, Math.max(0, 93 - line[x]));
  }
  ctx.strokeStyle = '#bdbdbd';
  ctx.beginPath();
  line.forEach((y, x) => ctx.lineTo(x, y));
  ctx.stroke();
}

function drawWaterfall() {
  const ctx = document.getElementById('waterfall').getContext('2d');
  const w = 1081;
  const h = 479;
  const image = ctx.createImageData(w, h);
  const wide = [[0, 254], [30, 238], [90, 232], [150, 242], [190, 250], [222, 254], [250, 232], [300, 222], [360, 232], [400, 225], [440, 238], [479, 232]];
  const strong = [[0, 629], [60, 626], [110, 628], [170, 627], [215, 638], [240, 643], [290, 644], [320, 636], [350, 637], [400, 632], [440, 641], [479, 634]];
  const weak = [[0, 48], [90, 46], [170, 44], [250, 62], [320, 48], [400, 50], [479, 42]];
  const red = [[0, 0], [0.5, 18], [0.75, 45], [1, 125]];
  const green = [[0, 0], [0.3, 0], [0.5, 40], [0.75, 120], [1, 205]];
  const blue = [[0, 62], [0.25, 135], [0.5, 228], [0.75, 255], [1, 255]];

  let drift = 0;
  for (let y = 0; y < h; y++) {
    drift = drift * 0.7 + (rand() - 0.5) * 6;
    const a = interpolate(wide, y) + drift * 2;
    const wa = 26 + rand() * 26;
    const b = interpolate(strong, y) + drift;
    const wb = 6 + rand() * rand() * 14;
    const c = interpolate(weak, y) + drift;
    for (let x = 0; x < w; x++) {
      let v = 0.13 + rand() * 0.17;
      v += (0.05 + 0.27 * rand()) * Math.exp(-Math.pow((x - a) / wa, 2));
      v += (0.12 + 0.55 * rand()) * Math.exp(-Math.pow((x - b) / wb, 2));
      v += 0.15 * rand() * Math.exp(-Math.pow((x - c) / 11, 2));
      const i = (y * w + x) * 4;
      image.data[i] = interpolate(red, v);
      image.data[i + 1] = interpolate(green, v);
      image.data[i + 2] = interpolate(blue, v);
      image.data[i + 3] = 255;
    }
  }
  ctx.putImageData(image, 0, 0);

  // steady carriers
  [[121, 0.75], [361, 0.7], [381, 0.8], [1014, 0.7], [370, 0.2], [374, 0.12], [950, 0.12], [568, 0.25]].forEach(([x, alpha]) => {
    for (let y = 0; y < h; y += 3) {
      ctx.fillStyle = `rgba(125, 175, 255, ${alpha * (0.7 + rand() * 0.4)})`;
      ctx.fillRect(x, y, alpha > 0.6 ? 1.5 : 1, 3);
    }
  });

  // filter edges
  ctx.fillStyle = '#6f7ea6';
  for (let y = 0; y < h; y += 3) {
    ctx.fillRect(512, y, 1, 1);
    ctx.fillRect(567, y, 1, 2);
  }

  // short bursts
  [[188, 0, w, 0.5], [88, 0, w, 0.25], [393, 0, w, 0.3], [177, 415, 475, 0.25], [177, 520, 552, 0.6], [408, 382, 568, 0.6], [292, 0, w, 0.1]].forEach(([y, from, to, alpha]) => {
    for (let x = from; x < to; x += 3) {
      ctx.fillStyle = `rgba(100, 150, 255, ${alpha * (0.3 + rand())})`;
      ctx.fillRect(x, y, 3, 1);
    }
  });

  // drifting carrier
  let x = 0;
  while (x < w) {
    const len = 25 + rand() * 70;
    ctx.strokeStyle = rand() > 0.5 ? '#8fe0e0' : '#62a4ec';
    ctx.lineWidth = 1.2;
    ctx.beginPath();
    ctx.moveTo(x, 370 - x * 0.0083);
    ctx.lineTo(x + len, 370 - (x + len) * 0.0083);
    ctx.stroke();
    x += len + 1 + rand() * 4;
  }
}

function fillLevels() {
  const levels = document.getElementById('levels');
  for (let db = -5; db >= -155; db -= 5) {
    const boxed = db <= -55 && db >= -105 ? ' class="boxed"' : '';
    levels.innerHTML += `<span${boxed}><b>${db}</b></span>`;
  }
}

fillLevels();
drawScope();
drawSpectrum();
drawWaterfall();
```
